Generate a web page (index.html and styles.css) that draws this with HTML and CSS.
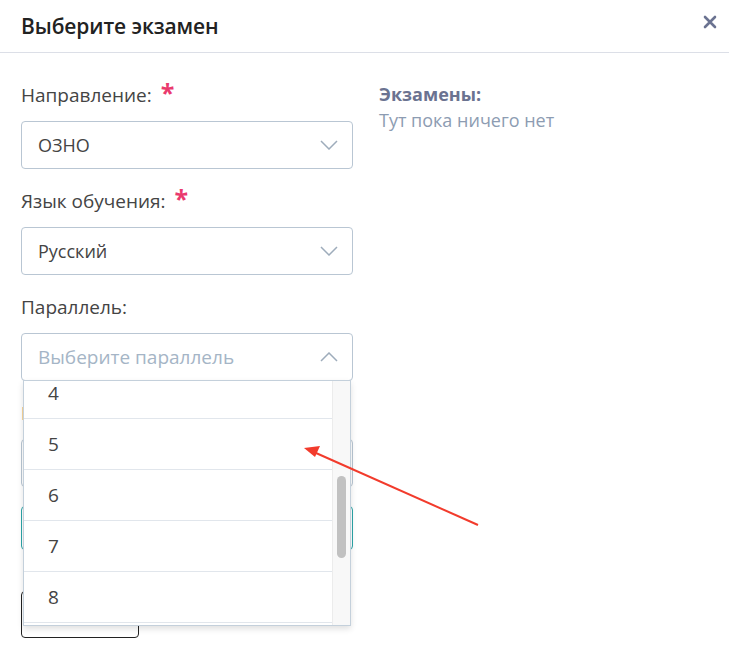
FILE: index.html
```html
<!DOCTYPE html>
<html lang="ru">
  <head>
    <meta charset="UTF-8" />
    <meta name="viewport" content="width=device-width, initial-scale=1.0" />
    <title>Выберите экзамен</title>
    <link rel="stylesheet" href="styles.css">
  </head>
  <body>
    <div class="modal">
      <div class="modalHead">
        <h2 class="modalTitle">Выберите экзамен</h2>
        <button class="closeBtn" aria-label="Закрыть">
          <svg width="14" height="14" viewBox="0 0 14 14">
            <path d="M2 2L12 12M12 2L2 12" stroke="#6b7391" stroke-width="2.6" stroke-linecap="round" />
          </svg>
        </button>
      </div>
      <div class="modalBody">
        <div class="formCol">
          <div class="field">
            <label class="fieldLabel">Направление:<span class="req">*</span></label>
            <div class="select">
              <span>ОЗНО</span>
              <svg class="chevron" width="18" height="10" viewBox="0 0 18 10"><path d="M1 1L9 9L17 1" /></svg>
            </div>
          </div>
          <div class="field">
            <label class="fieldLabel">Язык обучения:<span class="req">*</span></label>
            <div class="select">
              <span>Русский</span>
              <svg class="chevron" width="18" height="10" viewBox="0 0 18 10"><path d="M1 1L9 9L17 1" /></svg>
            </div>
          </div>
          <div class="field open">
            <label class="fieldLabel">Параллель:</label>
            <div class="select">
              <span class="placeholder">Выберите параллель</span>
              <svg class="chevron" width="18" height="10" viewBox="0 0 18 10"><path d="M1 9L9 1L17 9" /></svg>
            </div>
            <div class="dropdown">
              <ul class="options">
                <li>4</li>
                <li>5</li>
                <li>6</li>
                <li>7</li>
                <li>8</li>
              </ul>
              <div class="scrollTrack"><span class="scrollThumb"></span></div>
            </div>
          </div>
          <div class="field">
            <label class="fieldLabel">Предмет:</label>
            <div class="select"></div>
          </div>
          <button class="btnAdd"></button>
          <button class="btnSave"></button>
        </div>
        <div class="examsCol">
          <div class="examsTitle">Экзамены:</div>
          <div class="examsEmpty">Тут пока ничего нет</div>
        </div>
      </div>
      <svg class="pointer" width="729" height="660" viewBox="0 0 729 660">
        <line x1="478" y1="525" x2="316" y2="453" stroke="#f23b2c" stroke-width="2" />
        <path d="M304 448L320 446L315 457Z" fill="#f23b2c" />
      </svg>
    </div>
  </body>
</html>
```

FILE: styles.css
```css
body {
  margin: 0;
  background: #fff;
  font-family: "Open Sans", "Noto Sans", sans-serif;
  color: #444;
}
.modal {
  position: relative;
  width: 729px;
  height: 660px;
  overflow: hidden;
}
.modalHead {
  display: flex;
  align-items: center;
  justify-content: space-between;
  height: 52px;
  padding: 0 8px 0 21px;
  border-bottom: 1px solid #dcdfe7;
}
.modalTitle {
  margin: 0;
  font-size: 21px;
  font-weight: 600;
  color: #222;
  letter-spacing: -0.1px;
}
.closeBtn {
  border: 0;
  background: none;
  padding: 4px;
  margin-top: -6px;
  cursor: pointer;
}
.modalBody {
  display: flex;
  gap: 26px;
  padding: 30px 21px 0;
}
.formCol {
  width: 332px;
}
.field {
  position: relative;
  margin-bottom: 20px;
}
.fieldLabel {
  display: block;
  font-size: 19px;
  line-height: 24px;
  margin-bottom: 14px;
  color: #444;
}
.req {
  margin-left: 9px;
  color: #ea3a6e;
  font-weight: 700;
  font-size: 25px;
  line-height: 10px;
}
.select {
  display: flex;
  align-items: center;
  justify-content: space-between;
  box-sizing: border-box;
  height: 48px;
  padding: 0 14px 0 16px;
  border: 1px solid #b9c6d3;
  border-radius: 4px;
  font-size: 18px;
  color: #444;
}
.placeholder {
  color: #a5b5c6;
  font-size: 19px;
}
.chevron path {
  fill: none;
  stroke: #9eacbb;
  stroke-width: 1.5;
}
.dropdown {
  position: absolute;
  top: 85px;
  left: 2px;
  right: 2px;
  height: 246px;
  display: flex;
  box-sizing: border-box;
  border: 1px solid #c4d0db;
  background: #fff;
  box-shadow: 0 3px 6px rgba(0, 0, 0, 0.12);
  overflow: hidden;
  z-index: 2;
}
.options {
  flex: 1;
  margin: -13px 0 0;
  padding: 0;
  list-style: none;
}
.options li {
  height: 50px;
  line-height: 50px;
  padding-left: 24px;
  font-size: 19px;
  color: #444;
  border-bottom: 1px solid #e1e6ec;
}
.scrollTrack {
  width: 17px;
  background: #f8f8f8;
  border-left: 1px solid #ececec;
  position: relative;
}
.scrollThumb {
  position: absolute;
  top: 95px;
  left: 4px;
  width: 9px;
  height: 82px;
  border-radius: 5px;
  background: #c1c1c1;
}
.btnAdd {
  display: block;
  width: 100%;
  height: 44px;
  margin: -1px 0 41px;
  border: 1px solid #2ba5a8;
  border-radius: 4px;
  background: #fff;
}
.btnSave {
  display: block;
  width: 118px;
  height: 47px;
  border: 1px solid #222;
  border-radius: 4px;
  background: #fff;
}
.examsCol {
  margin-top: -2px;
}
.examsTitle {
  font-size: 18px;
  font-weight: 700;
  color: #6b7391;
  line-height: 26px;
}
.examsEmpty {
  font-size: 18px;
  color: #8d9cb2;
  line-height: 26px;
}
.pointer {
  position: absolute;
  top: 0;
  left: 0;
  pointer-events: none;
  z-index: 3;
}
```
